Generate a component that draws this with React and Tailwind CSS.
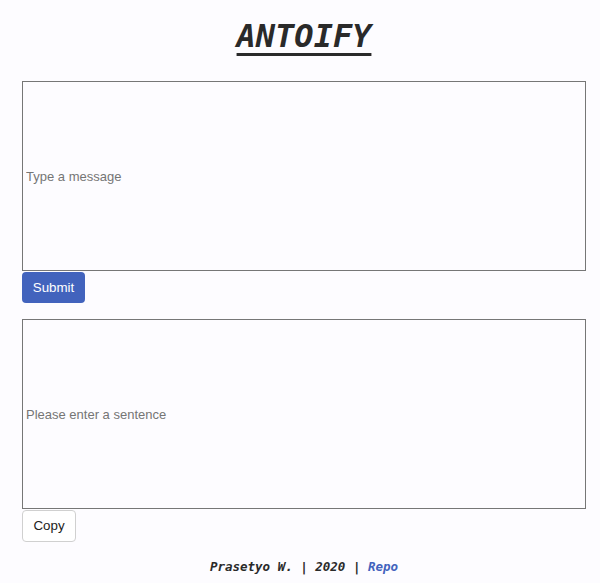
export default function App() {
  return (
    <div className="min-h-[583px] bg-[#fdfcff] px-[22px] pt-[14px]" style={{ fontFamily: '"Liberation Sans", Arial, sans-serif' }}>
      <h1 className="pl-[8px] text-center text-[32px] leading-[44px] font-bold italic underline text-[#2a2a2a] decoration-[3px] underline-offset-[6px]" style={{ fontFamily: '"DejaVu Sans Mono", monospace' }}>
        ANTOIFY
      </h1>
      <div className="mt-[23px]">
        <input
          type="text"
          placeholder="Type a message"
          className="block w-[564px] h-[190px] border border-[#767676] bg-[#fdfcff] px-[3px] text-[13px] text-[#222] placeholder:text-[#757575] outline-none"
        />
        <button className="mt-[1px] h-[31px] w-[63px] rounded-[4px] bg-[#4263bd] text-[13.33px] text-white">Submit</button>
      </div>
      <div className="mt-[16px]">
        <input
          type="text"
          placeholder="Please enter a sentence"
          className="block w-[564px] h-[190px] border border-[#767676] bg-[#fdfcff] px-[3px] text-[13px] text-[#222] placeholder:text-[#757575] outline-none"
        />
        <button className="mt-[1px] h-[32px] w-[54px] rounded-[4px] border border-[#d0d0d0] bg-white text-[13.33px] text-[#222]">Copy</button>
      </div>
      <p className="mt-[16px] pl-[8px] text-center text-[12.5px] font-bold italic text-[#2a2a2a]" style={{ fontFamily: '"DejaVu Sans Mono", monospace' }}>
        Prasetyo W. | 2020 | <a className="text-[#4263bd]">Repo</a>
      </p>
    </div>
  );
}
